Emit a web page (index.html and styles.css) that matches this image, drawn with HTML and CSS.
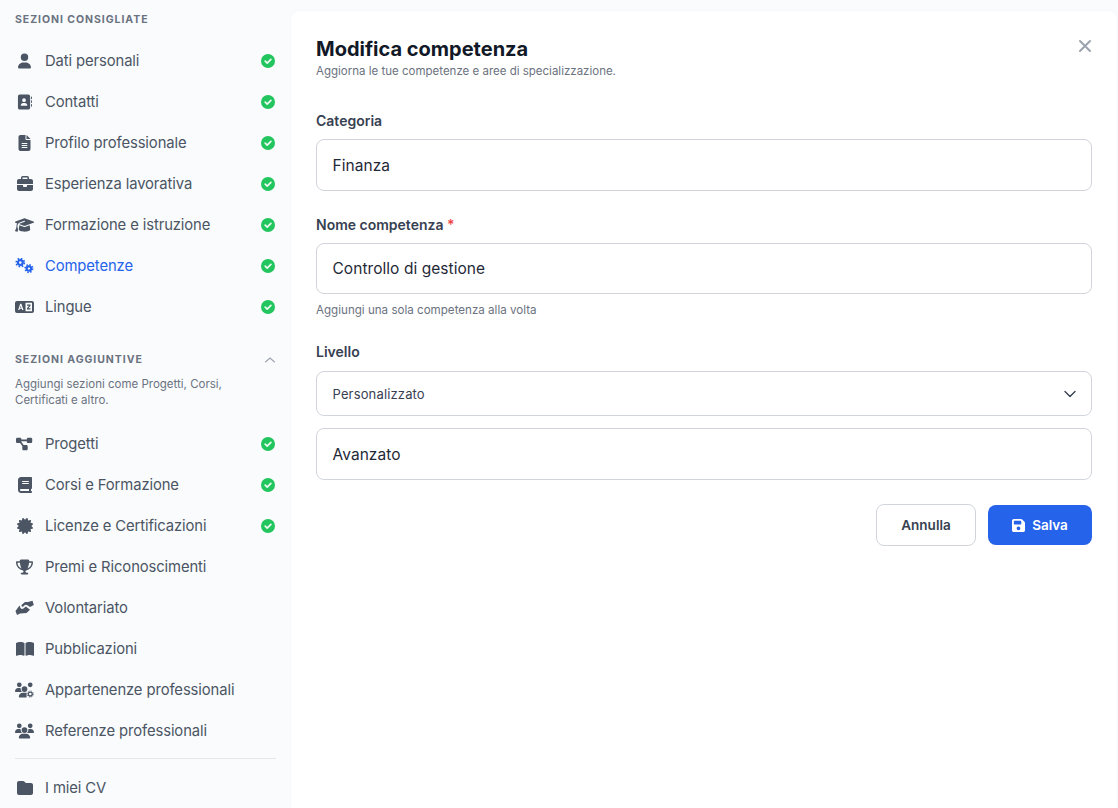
FILE: index.html
```html
<!DOCTYPE html>
<html lang="it">
<head>
<meta charset="utf-8">
<title>Modifica competenza</title>
<link rel="stylesheet" href="styles.css">
</head>
<body>
<svg class="defs" width="0" height="0" aria-hidden="true">
  <defs>
    <symbol id="i-user" viewBox="0 0 448 512"><path d="M224 256A128 128 0 1 0 224 0a128 128 0 1 0 0 256zm-45.700 48C79.800 304 0 383.800 0 482.300C0 498.700 13.300 512 29.700 512H418.300c16.400 0 29.700-13.300 29.700-29.700C448 383.800 368.200 304 269.700 304H178.300z"/></symbol>
    <symbol id="i-address" viewBox="0 0 512 512"><path d="M96 0C60.700 0 32 28.700 32 64V448c0 35.300 28.700 64 64 64H384c35.300 0 64-28.700 64-64V64c0-35.300-28.700-64-64-64H96zM208 288h64c44.200 0 80 35.800 80 80c0 8.800-7.200 16-16 16H144c-8.800 0-16-7.200-16-16c0-44.200 35.800-80 80-80zm-32-96a64 64 0 1 1 128 0 64 64 0 1 1 -128 0zM512 80c0-8.800-7.200-16-16-16s-16 7.200-16 16v64c0 8.800 7.200 16 16 16s16-7.200 16-16V80zM496 192c-8.800 0-16 7.200-16 16v64c0 8.800 7.200 16 16 16s16-7.200 16-16V208c0-8.800-7.200-16-16-16zm16 144c0-8.800-7.200-16-16-16s-16 7.200-16 16v64c0 8.800 7.200 16 16 16s16-7.200 16-16V336z"/></symbol>
    <symbol id="i-file" viewBox="0 0 384 512"><path d="M64 0C28.700 0 0 28.700 0 64V448c0 35.300 28.700 64 64 64H320c35.300 0 64-28.700 64-64V160H256c-17.700 0-32-14.300-32-32V0H64zM256 0V128H384L256 0zM112 256H272c8.800 0 16 7.200 16 16s-7.200 16-16 16H112c-8.800 0-16-7.200-16-16s7.200-16 16-16zm0 64H272c8.800 0 16 7.200 16 16s-7.200 16-16 16H112c-8.800 0-16-7.200-16-16s7.200-16 16-16zm0 64H272c8.800 0 16 7.200 16 16s-7.200 16-16 16H112c-8.800 0-16-7.200-16-16s7.200-16 16-16z"/></symbol>
    <symbol id="i-brief" viewBox="0 0 512 512"><path d="M184 48H328c4.400 0 8 3.600 8 8V96H176V56c0-4.400 3.600-8 8-8zm-56 8V96H64C28.700 96 0 124.700 0 160v96H192 320 512V160c0-35.300-28.700-64-64-64H384V56c0-30.900-25.100-56-56-56H184c-30.900 0-56 25.100-56 56zM512 288H320v32c0 17.700-14.300 32-32 32H224c-17.700 0-32-14.300-32-32V288H0V416c0 35.300 28.700 64 64 64H448c35.300 0 64-28.700 64-64V288z"/></symbol>
    <symbol id="i-cap" viewBox="0 0 640 512"><path d="M320 32c-8.100 0-16.100 1.400-23.700 4.100L15.800 137.400C6.300 140.900 0 149.900 0 160s6.300 19.100 15.800 22.600l57.900 20.900C57.300 229.300 48 259.800 48 291.900v28.100c0 28.400-10.800 57.700-22.300 80.800c-6.500 13-13.900 25.800-22.500 37.600C0 442.700-.9 448.300 .9 453.400s6 8.900 11.200 10.200l64 16c4.200 1.100 8.700 .3 12.400-2s6.300-6.100 7.100-10.400c8.600-42.800 4.300-81.200-2.100-108.700C90.300 344.300 86 329.800 80 316.500V291.900c0-30.200 10.200-58.700 27.900-81.500c12.900-15.500 29.600-28 49.200-35.700l157-61.700c8.200-3.200 17.500 .8 20.700 9s-.8 17.500-9 20.700l-157 61.700c-12.400 4.900-23.300 12.400-32.200 21.600l159.600 57.600c7.600 2.700 15.600 4.100 23.700 4.100s16.100-1.400 23.700-4.100L624.200 182.600c9.500-3.400 15.800-12.500 15.800-22.600s-6.300-19.100-15.800-22.600L343.700 36.100C336.100 33.400 328.100 32 320 32zM128 408c0 35.300 86 72 192 72s192-36.700 192-72L496.700 262.600 354.500 314c-11.100 4-22.800 6-34.500 6s-23.500-2-34.500-6L143.300 262.600 128 408z"/></symbol>
    <symbol id="i-gears" viewBox="0 0 18 16">
      <g fill="none" stroke="currentColor">
        <circle cx="4.800" cy="4.600" r="2.400" stroke-width="2.200"/>
        <circle cx="4.800" cy="4.600" r="4" stroke-width="1.800" stroke-dasharray="1.570 1.570"/>
        <circle cx="13.400" cy="10.600" r="2.200" stroke-width="2.100"/>
        <circle cx="13.400" cy="10.600" r="3.700" stroke-width="1.700" stroke-dasharray="1.450 1.450"/>
      </g>
    </symbol>
    <symbol id="i-lang" viewBox="0 0 19 14">
      <path fill-rule="evenodd" d="M2 1h15a2 2 0 0 1 2 2v8a2 2 0 0 1-2 2H2a2 2 0 0 1-2-2V3a2 2 0 0 1 2-2zM5.200 3.700 3.100 10h1.300l.4-1.300h2l.4 1.300h1.300L6.400 3.700H5.200zm.6 2-.7 2h1.300l-.6-2zM10.500 2.800h6.500v8.400h-6.500z"/>
      <path d="M12 4.500h3.500v1.200l-2 2.600h2v1.200H12V8.300l2-2.600h-2z"/>
    </symbol>
    <symbol id="i-diagram" viewBox="0 0 640 512"><path d="M0 80C0 53.500 21.500 32 48 32h96c26.500 0 48 21.500 48 48V96H384V80c0-26.500 21.500-48 48-48h96c26.500 0 48 21.500 48 48v96c0 26.500-21.500 48-48 48H432c-26.500 0-48-21.500-48-48V160H192v16c0 1.700-.1 3.400-.3 5L272 288h96c26.500 0 48 21.500 48 48v96c0 26.500-21.500 48-48 48H272c-26.500 0-48-21.500-48-48V336c0-1.700 .1-3.400 .3-5L144 224H48c-26.500 0-48-21.500-48-48V80z"/></symbol>
    <symbol id="i-book" viewBox="0 0 448 512"><path d="M96 0C43 0 0 43 0 96V416c0 53 43 96 96 96H384h32c17.700 0 32-14.300 32-32s-14.300-32-32-32V384c17.700 0 32-14.300 32-32V32c0-17.700-14.300-32-32-32H384 96zm0 384H352v64H96c-17.700 0-32-14.300-32-32s14.300-32 32-32zm32-240c0-8.800 7.200-16 16-16H336c8.800 0 16 7.200 16 16s-7.200 16-16 16H144c-8.800 0-16-7.200-16-16zm16 48H336c8.800 0 16 7.200 16 16s-7.200 16-16 16H144c-8.800 0-16-7.200-16-16s7.200-16 16-16z"/></symbol>
    <symbol id="i-cert" viewBox="0 0 512 512"><path d="M211 7.300C205 1 196-1.400 187.600 .8s-14.900 8.900-17.100 17.300L154.700 80.600l-62-17.500c-8.400-2.400-17.400 0-23.500 6.100s-8.500 15.100-6.100 23.500l17.500 62L18.100 170.600c-8.400 2.100-15 8.700-17.300 17.100S1 205 7.300 211l46.200 45L7.300 301C1 307-1.400 316 .8 324.400s8.900 14.900 17.300 17.100l62.500 15.800-17.500 62c-2.400 8.400 0 17.400 6.100 23.500s15.100 8.500 23.500 6.100l62-17.500 15.800 62.500c2.100 8.400 8.700 15 17.100 17.300s17.300-.2 23.400-6.400l45-46.200 45 46.200c6.100 6.200 15 8.700 23.400 6.400s14.900-8.900 17.100-17.300l15.800-62.500 62 17.500c8.400 2.400 17.400 0 23.500-6.100s8.500-15.100 6.100-23.500l-17.500-62 62.500-15.800c8.400-2.100 15-8.700 17.300-17.100s-.2-17.400-6.400-23.400l-46.200-45 46.200-45c6.200-6.100 8.700-15 6.400-23.400s-8.900-14.900-17.300-17.100l-62.500-15.800 17.500-62c2.400-8.400 0-17.400-6.100-23.500s-15.100-8.500-23.500-6.100l-62 17.500L341.400 18.100c-2.100-8.400-8.700-15-17.100-17.300S307 1 301 7.300L256 53.500 211 7.300z"/></symbol>
    <symbol id="i-trophy" viewBox="0 0 576 512"><path d="M400 0H176c-26.500 0-48.100 21.800-47.100 48.200c.2 5.300 .4 10.600 .7 15.800H24C10.700 64 0 74.700 0 88c0 92.600 33.500 157 78.500 200.700c44.300 43.100 98.300 64.800 138.100 75.800c23.400 6.500 39.400 26 39.400 45.600c0 20.900-17 37.900-37.900 37.900H192c-17.700 0-32 14.300-32 32s14.300 32 32 32H384c17.700 0 32-14.300 32-32s-14.300-32-32-32H357.900C337 448 320 431 320 410.100c0-19.600 15.900-39.200 39.400-45.600c39.900-11 93.900-32.700 138.200-75.800C542.500 245 576 180.600 576 88c0-13.300-10.700-24-24-24H446.400c.3-5.200 .5-10.400 .7-15.800C448.100 21.800 426.500 0 400 0zM48.900 112h84.400c9.100 90.100 29.200 150.300 51.900 190.600c-24.900-11-50.800-26.500-73.200-48.300c-32-31.100-58-76-63-142.300zM464.100 254.300c-22.400 21.800-48.300 37.300-73.200 48.300c22.700-40.300 42.800-100.500 51.900-190.600h84.400c-5.100 66.300-31.100 111.200-63 142.300z"/></symbol>
    <symbol id="i-hands" viewBox="0 0 19 15">
      <path d="M6.500 4.500 10 1.500h3L17.500.3l1.300 4.200L15 6.500l-3-2q-1.500-.7-2.500.3L8 6.200q-2 .3-1.500-1.700z"/>
      <path d="M.5 10.500 4.500 5l1 2.500q1 1.500 3 .5L10.800 6 15 9.200l-3.500 3.300-6.500.5-3 1.500z"/>
    </symbol>
    <symbol id="i-bookopen" viewBox="0 0 576 512"><path d="M249.600 471.500c10.800 3.800 22.400-4.100 22.400-15.500V78.600c0-4.200-1.600-8.400-5-11C247.400 52 202.400 32 144 32C93.500 32 46.300 45.300 18.100 56.100C6.800 60.500 0 71.700 0 83.800V454.100c0 11.900 12.800 20.200 24.100 16.500C55.600 460.100 105.500 448 144 448c33.900 0 79 14 105.600 23.500zm76.800 0C353 462 398.100 448 432 448c38.500 0 88.400 12.100 119.900 22.600c11.300 3.800 24.100-4.600 24.100-16.500V83.800c0-12.100-6.800-23.300-18.100-27.600C529.700 45.300 482.500 32 432 32c-58.400 0-103.400 20-123 35.600c-3.300 2.600-5 6.800-5 11V456c0 11.400 11.700 19.300 22.400 15.500z"/></symbol>
    <symbol id="i-users" viewBox="0 0 640 512"><path d="M144 0a80 80 0 1 1 0 160A80 80 0 1 1 144 0zM512 0a80 80 0 1 1 0 160A80 80 0 1 1 512 0zM0 298.700C0 239.800 47.800 192 106.700 192h42.700c15.900 0 31 3.500 44.600 9.700c-1.300 7.200-1.900 14.700-1.900 22.300c0 38.200 16.800 72.500 43.300 96c-.2 0-.4 0-.7 0H21.300C9.600 320 0 310.400 0 298.700zM405.300 320c-.2 0-.4 0-.7 0c26.600-23.500 43.300-57.800 43.300-96c0-7.600-.7-15-1.900-22.300c13.600-6.300 28.700-9.700 44.600-9.700h42.700C592.200 192 640 239.800 640 298.700c0 11.800-9.600 21.300-21.300 21.300H405.300zM224 224a96 96 0 1 1 192 0 96 96 0 1 1 -192 0zM128 485.300C128 411.700 187.700 352 261.300 352H378.700C452.300 352 512 411.700 512 485.300c0 14.700-11.900 26.700-26.700 26.700H154.700c-14.700 0-26.700-11.900-26.700-26.700z"/></symbol>
    <symbol id="i-usersgear" viewBox="0 0 640 512"><path d="M144 0a80 80 0 1 1 0 160A80 80 0 1 1 144 0zM512 0a80 80 0 1 1 0 160A80 80 0 1 1 512 0zM0 298.700C0 239.800 47.800 192 106.700 192h42.700c15.900 0 31 3.500 44.600 9.700c-1.300 7.200-1.900 14.700-1.900 22.300c0 38.200 16.800 72.500 43.300 96c-.2 0-.4 0-.7 0H21.300C9.600 320 0 310.400 0 298.700zM224 224a96 96 0 1 1 192 0 96 96 0 1 1 -192 0zM128 485.300C128 411.700 187.700 352 261.300 352H378.700c4 0 8 .2 11.300 .5V512H154.700c-14.700 0-26.700-11.900-26.700-26.700z"/>
      <g fill="none" stroke="currentColor"><circle cx="515" cy="392" r="66" stroke-width="44"/><circle cx="515" cy="392" r="104" stroke-width="28" stroke-dasharray="41 40.700"/></g></symbol>
    <symbol id="i-folder" viewBox="0 0 512 512"><path d="M64 480H448c35.300 0 64-28.700 64-64V160c0-35.300-28.700-64-64-64H288c-10.100 0-19.600-4.700-25.600-12.800L243.200 57.600C231.100 41.500 212.100 32 192 32H64C28.700 32 0 60.700 0 96V416c0 35.300 28.700 64 64 64z"/></symbol>
    <symbol id="i-save" viewBox="0 0 448 512"><path d="M64 32C28.700 32 0 60.700 0 96V416c0 35.300 28.700 64 64 64H384c35.300 0 64-28.700 64-64V173.300c0-17-6.700-33.300-18.700-45.300L352 50.700C340 38.700 323.700 32 306.700 32H64zm0 96c0-17.700 14.300-32 32-32H288c17.700 0 32 14.300 32 32v64c0 17.700-14.300 32-32 32H96c-17.700 0-32-14.300-32-32V128zM224 288a64 64 0 1 1 0 128 64 64 0 1 1 0-128z"/></symbol>
    <symbol id="i-check" viewBox="0 0 14 14"><circle cx="7" cy="7" r="7" fill="#22c55e"/><path d="M4.200 7.200 6.200 9.100 9.900 5.300" fill="none" stroke="#fff" stroke-width="1.700" stroke-linecap="round" stroke-linejoin="round" opacity=".92"/></symbol>
  </defs>
</svg>

<div class="app">
  <aside class="sidebar">
    <h2 class="section-title first">SEZIONI CONSIGLIATE</h2>
    <ul class="menu">
      <li class="item"><span class="ico"><svg class="g w13"><use href="#i-user"/></svg></span><span class="label">Dati personali</span><svg class="ok"><use href="#i-check"/></svg></li>
      <li class="item"><span class="ico"><svg class="g w15"><use href="#i-address"/></svg></span><span class="label">Contatti</span><svg class="ok"><use href="#i-check"/></svg></li>
      <li class="item"><span class="ico"><svg class="g w13"><use href="#i-file"/></svg></span><span class="label">Profilo professionale</span><svg class="ok"><use href="#i-check"/></svg></li>
      <li class="item"><span class="ico"><svg class="g w16"><use href="#i-brief"/></svg></span><span class="label">Esperienza lavorativa</span><svg class="ok"><use href="#i-check"/></svg></li>
      <li class="item"><span class="ico"><svg class="g w19"><use href="#i-cap"/></svg></span><span class="label">Formazione e istruzione</span><svg class="ok"><use href="#i-check"/></svg></li>
      <li class="item active"><span class="ico"><svg class="g w19"><use href="#i-gears"/></svg></span><span class="label">Competenze</span><svg class="ok"><use href="#i-check"/></svg></li>
      <li class="item"><span class="ico"><svg class="g w19"><use href="#i-lang"/></svg></span><span class="label">Lingue</span><svg class="ok"><use href="#i-check"/></svg></li>
    </ul>
    <div class="section-head">
      <h2 class="section-title">SEZIONI AGGIUNTIVE</h2>
      <svg class="chev-up" viewBox="0 0 12 8"><path d="M1.500 6 6 2l4.500 4" fill="none" stroke="currentColor" stroke-width="1.100" stroke-linecap="round" stroke-linejoin="round"/></svg>
    </div>
    <p class="section-desc">Aggiungi sezioni come Progetti, Corsi, Certificati e altro.</p>
    <ul class="menu">
      <li class="item"><span class="ico"><svg class="g w18"><use href="#i-diagram"/></svg></span><span class="label">Progetti</span><svg class="ok"><use href="#i-check"/></svg></li>
      <li class="item"><span class="ico"><svg class="g w14"><use href="#i-book"/></svg></span><span class="label">Corsi e Formazione</span><svg class="ok"><use href="#i-check"/></svg></li>
      <li class="item"><span class="ico"><svg class="g w16"><use href="#i-cert"/></svg></span><span class="label">Licenze e Certificazioni</span><svg class="ok"><use href="#i-check"/></svg></li>
      <li class="item"><span class="ico"><svg class="g w17"><use href="#i-trophy"/></svg></span><span class="label">Premi e Riconoscimenti</span></li>
      <li class="item"><span class="ico"><svg class="g w19"><use href="#i-hands"/></svg></span><span class="label">Volontariato</span></li>
      <li class="item"><span class="ico"><svg class="g w18"><use href="#i-bookopen"/></svg></span><span class="label">Pubblicazioni</span></li>
      <li class="item"><span class="ico"><svg class="g w19"><use href="#i-usersgear"/></svg></span><span class="label">Appartenenze professionali</span></li>
      <li class="item"><span class="ico"><svg class="g w19"><use href="#i-users"/></svg></span><span class="label">Referenze professionali</span></li>
    </ul>
    <div class="divider"></div>
    <ul class="menu">
      <li class="item"><span class="ico"><svg class="g w16"><use href="#i-folder"/></svg></span><span class="label">I miei CV</span></li>
    </ul>
  </aside>

  <main class="panel">
    <header class="panel-head">
      <div>
        <h1 class="title">Modifica competenza</h1>
        <p class="subtitle">Aggiorna le tue competenze e aree di specializzazione.</p>
      </div>
      <svg class="close" viewBox="0 0 14 14"><path d="M2 2l10 10M12 2 2 12" fill="none" stroke="currentColor" stroke-width="2" stroke-linecap="round"/></svg>
    </header>

    <div class="field f-cat">
      <div class="flabel">Categoria</div>
      <div class="box tall">Finanza</div>
    </div>
    <div class="field f-name">
      <div class="flabel">Nome competenza <span class="req">*</span></div>
      <div class="box tall mid">Controllo di gestione</div>
      <div class="hint">Aggiungi una sola competenza alla volta</div>
    </div>
    <div class="field f-level">
      <div class="flabel">Livello</div>
      <div class="box select">Personalizzato
        <svg class="chev" viewBox="0 0 12 8"><path d="M1 1.500 6 6.500l5-5" fill="none" stroke="currentColor" stroke-width="1.400" stroke-linecap="round" stroke-linejoin="round"/></svg>
      </div>
      <div class="box tall gap">Avanzato</div>
    </div>
    <div class="actions">
      <button class="btn ghost" type="button">Annulla</button>
      <button class="btn primary" type="button"><svg class="save"><use href="#i-save"/></svg>Salva</button>
    </div>
  </main>
</div>
</body>
</html>
```

FILE: styles.css
```css
* { box-sizing: border-box; }
html, body { margin: 0; padding: 0; height: 100%; }
body {
  background: #f9fbfd;
  font-family: "Inter", "Liberation Sans", sans-serif;
  color: #4b5563;
  overflow: hidden;
}
.defs { position: absolute; }
.app { display: flex; height: 808px; }

.sidebar { width: 291px; flex: none; padding: 14px 15px 0; }
.section-title {
  margin: 0;
  font-size: 10.5px;
  line-height: 12px;
  font-weight: 700;
  letter-spacing: .95px;
  color: #6b7280;
}
.menu { list-style: none; margin: 0; padding: 0; }
.section-title.first + .menu { margin-top: 14px; }
.item {
  display: flex;
  align-items: center;
  height: 41px;
  font-size: 14.8px;
  letter-spacing: -.1px;
  color: #4b5563;
}
.item.active { color: #2563eb; }
.ico { width: 30px; flex: none; display: flex; align-items: center; padding-right: 11px; justify-content: center; height: 20px; }
.ico .g { height: 16px; fill: currentColor; color: inherit; }
.w13 { width: 13px; } .w14 { width: 14px; } .w15 { width: 15px; } .w16 { width: 16px; }
.w17 { width: 17px; } .w18 { width: 18px; } .w19 { width: 19px; }
.label { flex: 1; white-space: nowrap; }
.ok { width: 14px; height: 14px; flex: none; margin-right: 1px; }

.section-head { display: flex; align-items: center; justify-content: space-between; margin-top: 27px; }
.chev-up { width: 12px; height: 8px; color: #9ca3af; margin-right: 0; }
.section-desc {
  margin: 10px 0 15px;
  width: 230px;
  font-size: 11.5px;
  line-height: 16px;
  color: #6b7280;
}
.divider { height: 1px; background: #e5e7eb; margin: 7px 0 8px; }

.panel {
  flex: 1;
  margin: 11px 1px 0 0;
  padding: 25px 25px 0;
  background: #fff;
  border-radius: 8px 8px 0 0;
  box-shadow: 0 0 2px rgba(15, 23, 42, .05);
}
.panel-head { display: flex; justify-content: space-between; align-items: flex-start; }
.title { margin: 0; font-size: 20px; line-height: 26px; font-weight: 700; color: #111827; }
.subtitle { margin: 1px 0 0; font-size: 11.5px; line-height: 16px; color: #6b7280; }
.close { width: 14px; height: 14px; color: #9ca3af; margin: 3px 0 0; }

.f-cat { margin-top: 33px; }
.f-name { margin-top: 25px; }
.f-level { margin-top: 25px; }
.f-level .flabel { margin-bottom: 10px; }
.flabel { font-size: 14px; line-height: 18px; font-weight: 600; color: #374151; margin-bottom: 9px; }
.req { color: #ef4444; }
.box {
  display: flex;
  align-items: center;
  border: 1px solid #d1d5db;
  border-radius: 8px;
  padding: 0 16px 0 15.500px;
  background: #fff;
  font-size: 15.5px;
  letter-spacing: .05px;
  color: #1f2937;
}
.tall { height: 52px; }
.tall.mid { height: 51px; }
.select { height: 45px; font-size: 13px; letter-spacing: .15px; justify-content: space-between; color: #374151; }
.chev { width: 12px; height: 8px; color: #374151; margin-right: -1px; }
.gap { margin-top: 12px; }
.hint { font-size: 11.600px; line-height: 16px; margin-top: 8px; color: #6b7280; }

.actions { display: flex; justify-content: flex-end; align-items: center; gap: 12px; margin-top: 24px; }
.btn {
  display: inline-flex;
  align-items: center;
  justify-content: center;
  font: 600 13.5px "Inter", "Liberation Sans", sans-serif;
  border-radius: 8px;
  cursor: pointer;
}
.ghost { width: 100px; height: 42px; background: #fff; border: 1px solid #d1d5db; color: #374151; }
.primary { width: 104px; height: 40px; background: #2563eb; border: 0; color: #fff; gap: 7px; }
.save { width: 13px; height: 15px; fill: #fff; }
```
